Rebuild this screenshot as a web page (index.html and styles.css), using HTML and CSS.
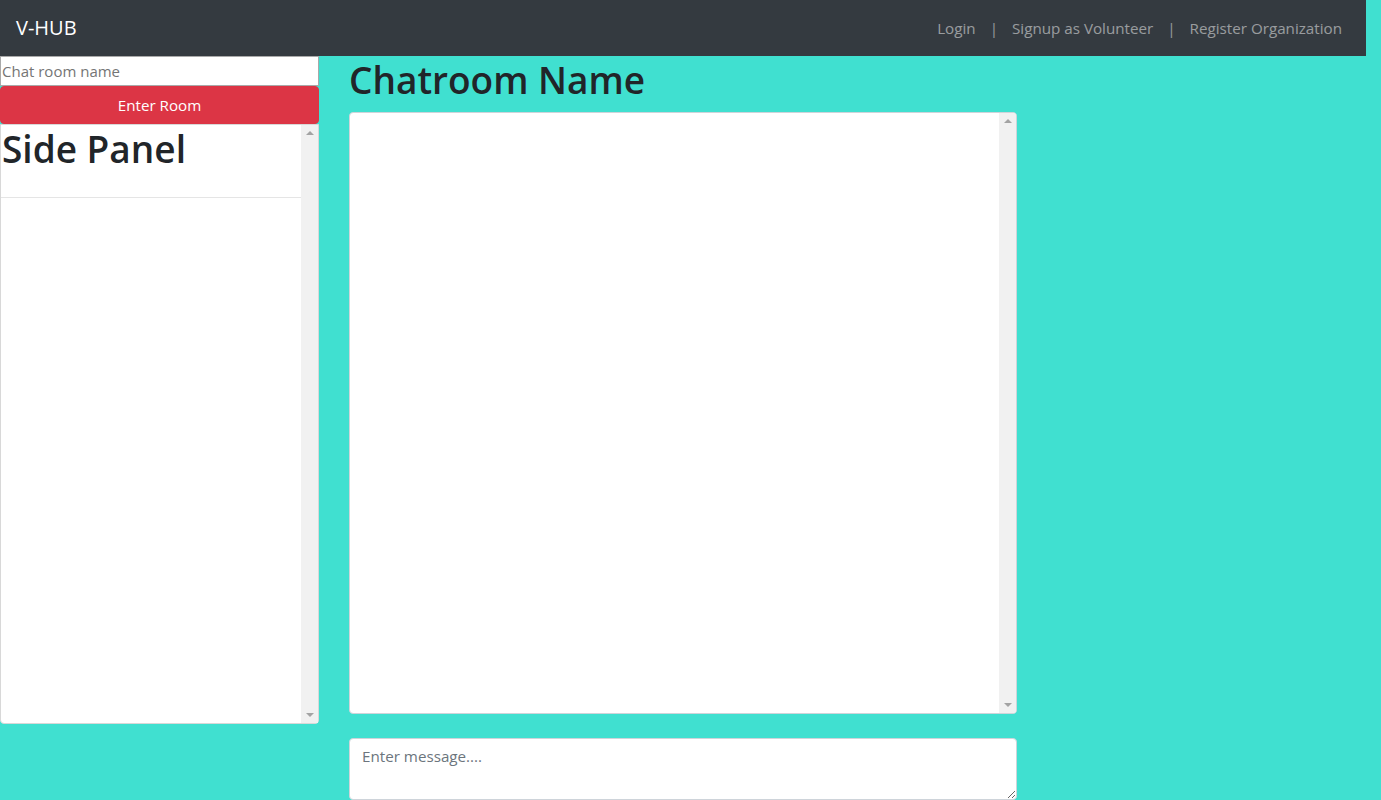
FILE: index.html
```html
<!DOCTYPE html>
<html lang="en">
<head>
<meta charset="utf-8">
<title>V-HUB Chat</title>
<link rel="stylesheet" href="styles.css">
</head>
<body>
<nav class="navbar">
  <a class="brand" href="#">V-HUB</a>
  <div class="nav-links">
    <a class="nav-link" href="#">Login</a>
    <span class="sep">|</span>
    <a class="nav-link" href="#">Signup as Volunteer</a>
    <span class="sep">|</span>
    <a class="nav-link" href="#">Register Organization</a>
  </div>
</nav>
<div class="layout">
  <aside class="side">
    <input class="room-input" type="text" placeholder="Chat room name">
    <button class="enter-btn" type="button">Enter Room</button>
    <div class="panel">
      <div class="panel-content">
        <h1 class="heading">Side Panel</h1>
        <hr class="divider">
      </div>
      <div class="scrollbar">
        <span class="arrow-up"></span>
        <span class="arrow-down"></span>
      </div>
    </div>
  </aside>
  <main class="main">
    <h1 class="heading">Chatroom Name</h1>
    <div class="chat-box">
      <div class="chat-content"></div>
      <div class="scrollbar">
        <span class="arrow-up"></span>
        <span class="arrow-down"></span>
      </div>
    </div>
    <textarea class="message" rows="2" placeholder="Enter message...."></textarea>
  </main>
</div>
</body>
</html>
```
FILE: styles.css
```css
* { box-sizing: border-box; }
html, body { margin: 0; padding: 0; }
body {
  background: #40e0d0;
  font-family: "Open Sans", "Noto Sans", sans-serif;
  font-size: 16px;
  line-height: 1.5;
  color: #212529;
  height: 800px;
  overflow: hidden;
}
.navbar {
  width: 1366px;
  height: 56px;
  background: #343a40;
  display: flex;
  align-items: center;
  justify-content: space-between;
  padding: 0 24px 0 16px;
}
.brand {
  color: #fff;
  font-size: 20px;
  text-decoration: none;
}
.nav-links {
  display: flex;
  align-items: center;
  gap: 14px;
}
.nav-link, .sep {
  color: rgba(255,255,255,.5);
  text-decoration: none;
  font-size: 15.2px;
}
.layout {
  display: flex;
  gap: 30px;
}
.side {
  width: 319px;
  display: flex;
  flex-direction: column;
}
.room-input {
  height: 30px;
  width: 319px;
  border: 1px solid #a9a9a9;
  padding: 1px 1px;
  font-family: inherit;
  font-size: 15px;
  margin: 0;
  outline: none;
}
.room-input::placeholder { color: #757575; }
.enter-btn {
  height: 38px;
  width: 319px;
  background: #dc3545;
  border: 1px solid #dc3545;
  border-radius: 4px;
  color: #fff;
  font-family: inherit;
  font-size: 15.2px;
  padding: 0;
}
.panel {
  height: 600px;
  background: #fff;
  border: 1px solid #d8d8d8;
  border-radius: 0 0 4px 4px;
  display: flex;
}
.panel-content {
  flex: 1;
}
.heading {
  font-size: 37px;
  font-weight: 600;
  line-height: 48px;
  margin: 0 0 8px 0;
  color: #212529;
}
.panel .heading { padding-left: 1px; }
.divider {
  margin: 24px 0 0 0;
  border: 0;
  border-top: 1px solid rgba(0,0,0,.1);
}
.scrollbar {
  width: 17px;
  background: #f1f1f1;
  display: flex;
  flex-direction: column;
  justify-content: space-between;
  align-items: center;
  padding: 6px 0;
}
.arrow-up {
  width: 0; height: 0;
  border-left: 4px solid transparent;
  border-right: 4px solid transparent;
  border-bottom: 4px solid #a3a3a3;
}
.arrow-down {
  width: 0; height: 0;
  border-left: 4px solid transparent;
  border-right: 4px solid transparent;
  border-top: 4px solid #a3a3a3;
}
.main {
  width: 668px;
  display: flex;
  flex-direction: column;
}
.chat-box {
  height: 602px;
  background: #fff;
  border: 1px solid #ced4da;
  border-radius: 4px;
  display: flex;
  overflow: hidden;
}
.chat-content { flex: 1; }
.message {
  margin-top: 24px;
  height: 62px;
  width: 668px;
  border: 1px solid #ced4da;
  border-radius: 4px;
  padding: 6px 12px;
  font-family: inherit;
  font-size: 15.2px;
  line-height: 1.5;
  color: #495057;
  background: #fff;
  resize: vertical;
  outline: none;
}
.message::placeholder { color: #6c757d; }
```
